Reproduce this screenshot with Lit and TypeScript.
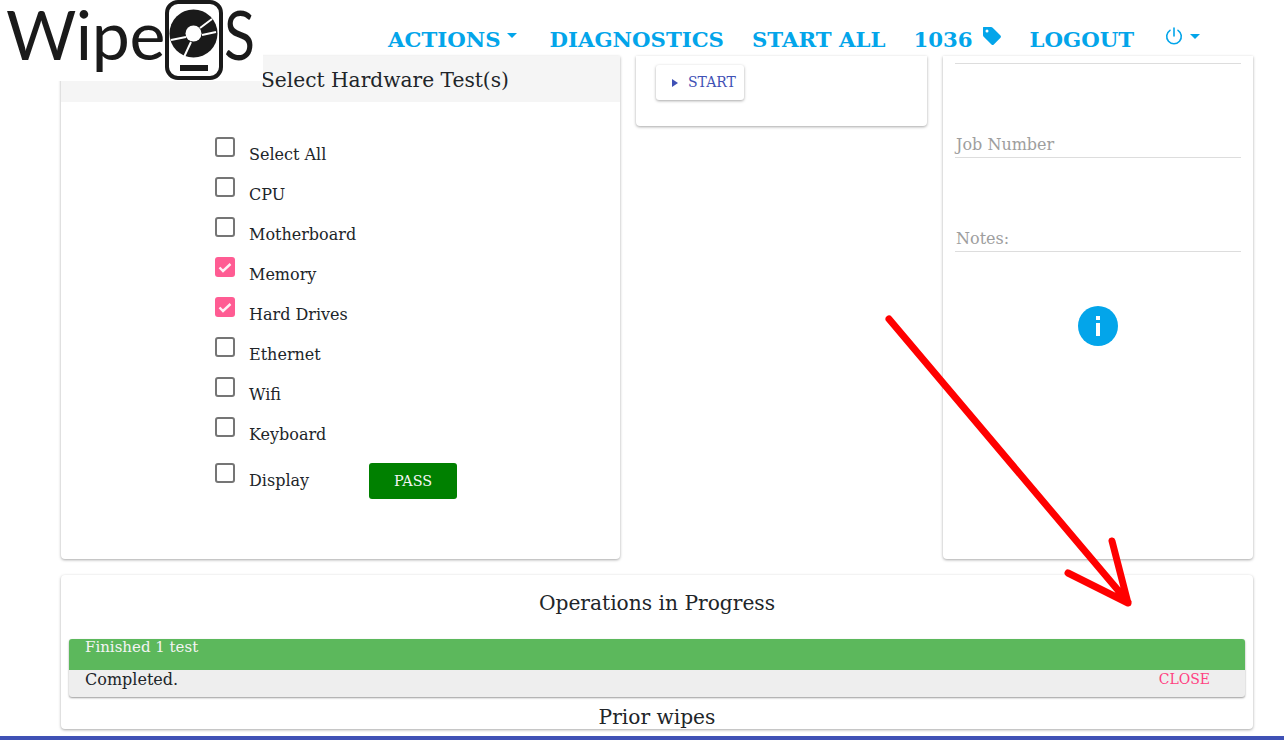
import { LitElement, html, css } from "lit";
import { customElement } from "lit/decorators.js";

const TESTS: [string, boolean][] = [
  ["Select All", false],
  ["CPU", false],
  ["Motherboard", false],
  ["Memory", true],
  ["Hard Drives", true],
  ["Ethernet", false],
  ["Wifi", false],
  ["Keyboard", false],
];

const caret = html`<span class="caret"></span>`;

@customElement("app-root")
export class AppRoot extends LitElement {
  static styles = css`
    :host {
      display: block;
      position: relative;
      width: 1284px;
      height: 740px;
      overflow: hidden;
      background: #fff;
      color: #212529;
      font-family: "DejaVu Serif", serif;
      font-size: 16px;
    }
    .logo {
      position: absolute; left: 0; top: 0; width: 263px; height: 81px; background: #fff; z-index: 2;
      display: flex; align-items: flex-start; padding-left: 6px; box-sizing: border-box;
      font-family: Lato, sans-serif; font-size: 68px; line-height: 68px; color: #1a1a1a; font-weight: 400;
    }
    .logo .w { letter-spacing: -0.4px; width: 159px; flex: none; }
    .logo .s { margin-left: 1px; transform: scaleX(0.84); transform-origin: left center; }
    .logo svg { display: block; flex: none; }
    .arrow { position: absolute; left: 0; top: 0; z-index: 3; pointer-events: none; }
    header {
      height: 56px;
      box-sizing: border-box;
      padding: 25px 0 0 388px;
      display: flex;
      align-items: flex-start;
      color: #03a5ea;
      font-weight: 700;
      font-size: 21.28px;
      line-height: 29px;
      white-space: nowrap;
    }
    .nav { display: flex; align-items: center; margin-right: 28px; }
    .nav.pw { align-items: flex-start; }
    .caret { display: inline-block; width: 0; height: 0; border: 5px solid transparent; border-top-color: currentColor; border-bottom: 0; }
    .nav .caret { margin: 0 5px 8px 6px; }
    .tag { margin: -7px 0 0 9px; display: block; }
    .power { margin: 2px 0 0 3px; display: block; }
    .nav .pcaret { margin: 9px 0 0 7px; }
    main { padding: 0 31px 0 61px; }
    .grid { display: grid; grid-template-columns: 559px 291px 310px; column-gap: 16px; height: 503px; }
    .card {
      background: #fff;
      border-radius: 0 0 4px 4px;
      box-shadow: 0 1px 3px rgba(0, 0, 0, 0.35);
      box-sizing: border-box;
    }
    .strip {
      height: 46px;
      background: #f5f5f5;
      text-align: center;
      font-size: 20.2px;
      line-height: 48px;
      padding-left: 89px;
    }
    .list { padding: 35px 0 0 154px; display: flex; flex-direction: column; }
    .row { display: flex; height: 40px; align-items: flex-start; }
    .row.last { margin-top: 6px; }
    .box { width: 20px; height: 20px; box-sizing: border-box; border: 2px solid #757575; border-radius: 3px; margin-right: 14px; flex: none; }
    .box.on { background: #ff5c93; border: 0; }
    .box.on svg { display: block; }
    .label { width: 120px; padding-top: 8px; line-height: 20px; }
    .pass {
      width: 88px; height: 36px; border-radius: 3px;
      background: #008000; color: #f4f4f4; font-size: 14.4px;
      display: flex; align-items: center; justify-content: center;
    }
    .middle { align-self: start; height: 70px; padding: 9px 0 0 20px; }
    .start {
      width: 88px; height: 35px; box-sizing: border-box; border-radius: 3px;
      box-shadow: 0 1px 3px rgba(0, 0, 0, 0.35);
      color: #3f51b5; font-size: 14px; padding: 0 0 2px 16px;
      display: flex; align-items: center; gap: 10px;
    }
    .tri { width: 0; height: 0; border-left: 6px solid #3f51b5; border-top: 4px solid transparent; border-bottom: 4px solid transparent; margin-top: 2px; }
    .right { padding: 0 12px; }
    .field { height: 94px; box-sizing: border-box; border-bottom: 1px solid #ddd; color: #9e9e9e; font-size: 16px; line-height: 20px; display: flex; align-items: flex-end; padding: 0 0 2px 1px; }
    .field.first { height: 8px; padding: 0; }
    .info { display: flex; justify-content: center; margin-top: 54px; }
    .info svg { display: block; }
    .progress {
      height: 154px; margin-top: 16px; border-radius: 4px; padding: 0 8px;
      display: flex; flex-direction: column; text-align: center;
    }
    .title { height: 64px; flex: none; font-size: 20.2px; line-height: 56px; }
    .panel { height: 58px; flex: none; border-radius: 3px; background: #eee; box-shadow: 0 1px 2px rgba(0, 0, 0, 0.4); text-align: left; }
    .bar { height: 31px; background: #5cb85c; color: #f4f4f4; border-radius: 3px 3px 0 0; font-size: 15px; line-height: 16px; padding-left: 16px; }
    .msg { display: flex; justify-content: space-between; height: 27px; padding: 0 35px 0 16px; font-size: 16px; line-height: 20px; }
    .close { color: #ff4081; font-size: 14px; line-height: 18px; }
    .prior { font-size: 20.2px; line-height: 40px; }
    .foot { height: 4px; margin-top: 7px; background: #3f51b5; }
  `;

  private logo() {
    return html`<div class="logo">
      <span class="w">Wipe</span>
      <svg width="58" height="80" viewBox="165 0 58 80">
        <rect x="167" y="2" width="54" height="76" rx="11" fill="#fff" stroke="#1a1a1a" stroke-width="4"/>
        <circle cx="193.500" cy="33.500" r="24" fill="#1a1a1a"/>
        <path d="M200 28 L212 19 M202 35 L216 32 M186 37 L171 40 M191 42 L184 57" fill="none" stroke="#fff" stroke-width="2"/>
        <circle cx="193.500" cy="33.500" r="8" fill="#fff"/>
        <rect x="180" y="65" width="28" height="6" fill="#1a1a1a"/>
      </svg>
      <span class="s">S</span>
    </div>`;
  }

  private checkbox(on: boolean) {
    return on
      ? html`<span class="box on"><svg width="20" height="20" viewBox="0 0 20 20"><path d="M4.500 10.500 L8 14 L15.500 7" fill="none" stroke="#fff0f5" stroke-width="2.400"/></svg></span>`
      : html`<span class="box"></span>`;
  }

  render() {
    return html`
      ${this.logo()}
      <svg class="arrow" width="1284" height="740" viewBox="0 0 1284 740">
        <path d="M889 319 L1128 602 M1112 541 L1128 603 L1068 573" fill="none" stroke="#ff0000" stroke-width="7" stroke-linecap="round" stroke-linejoin="round"/>
      </svg>
      <header>
        <div class="nav">ACTIONS${caret}</div>
        <div class="nav">DIAGNOSTICS</div>
        <div class="nav">START ALL</div>
        <div class="nav">1036
          <svg class="tag" width="20" height="20" viewBox="0 0 20 20"><path fill-rule="evenodd" d="M1 1.500 Q1 1 1.500 1 L9 1 Q10 1 10.700 1.700 L18.500 9.500 Q19.500 10.700 18.500 11.800 L11.800 18.500 Q10.700 19.500 9.500 18.500 L1.700 10.700 Q1 10 1 9 Z M5 3.500 A1.500 1.500 0 1 0 5 6.500 A1.500 1.500 0 1 0 5 3.500 Z" fill="currentColor"/></svg>
        </div>
        <div class="nav">LOGOUT</div>
        <div class="nav pw">
          <svg class="power" width="18" height="18" viewBox="0 0 18 18"><path d="M9 1 V9 M5 3.300 A7.300 7.300 0 1 0 13 3.300" fill="none" stroke="currentColor" stroke-width="1.600" stroke-linecap="round"/></svg>
          <span class="caret pcaret"></span>
        </div>
      </header>
      <main>
        <div class="grid">
          <section class="card">
            <div class="strip">Select Hardware Test(s)</div>
            <div class="list">
              ${TESTS.map(([name, on]) => html`<div class="row">${this.checkbox(on)}<span class="label">${name}</span></div>`)}
              <div class="row last">
                ${this.checkbox(false)}<span class="label">Display</span>
                <div class="pass">PASS</div>
              </div>
            </div>
          </section>
          <section class="card middle">
            <div class="start"><span class="tri"></span>START</div>
          </section>
          <section class="card right">
            <div class="field first"></div>
            <div class="field">Job Number</div>
            <div class="field">Notes:</div>
            <div class="info">
              <svg width="40" height="40" viewBox="0 0 40 40"><circle cx="20" cy="20" r="20" fill="#03a5ea"/><rect x="18" y="10" width="4" height="4" fill="#fff"/><rect x="18" y="17" width="4" height="13" fill="#fff"/></svg>
            </div>
          </section>
        </div>
        <section class="card progress">
          <div class="title">Operations in Progress</div>
          <div class="panel">
            <div class="bar">Finished 1 test</div>
            <div class="msg"><span>Completed.</span><span class="close">CLOSE</span></div>
          </div>
          <div class="prior">Prior wipes</div>
        </section>
      </main>
      <div class="foot"></div>
    `;
  }
}
